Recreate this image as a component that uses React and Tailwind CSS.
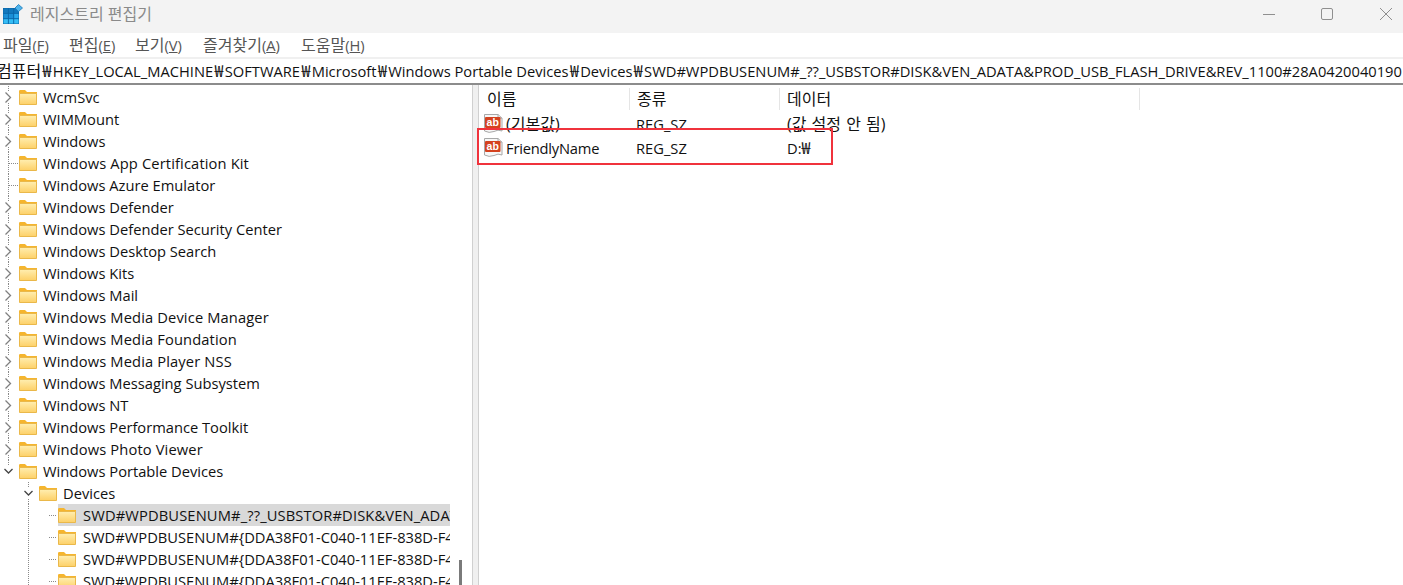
import { useId } from "react";

const FONT = "font-['Open_Sans','Noto_Sans_CJK_KR',sans-serif]";

const ADDRESS =
  "컴퓨터₩HKEY_LOCAL_MACHINE₩SOFTWARE₩Microsoft₩Windows Portable Devices₩Devices₩SWD#WPDBUSENUM#_??_USBSTOR#DISK&VEN_ADATA&PROD_USB_FLASH_DRIVE&REV_1100#28A0420040190";

const MENUS = [
  { label: "파일", key: "F", cls: "w-[66px]" },
  { label: "편집", key: "E", cls: "w-[66px]" },
  { label: "보기", key: "V", cls: "w-[68px]" },
  { label: "즐겨찾기", key: "A", cls: "w-[98px]" },
  { label: "도움말", key: "H", cls: "w-[80px]" },
];

// 레지스트리 트리 행: open = 펼침, leaf = 자식 없음, level = 들여쓰기, wide = 글자 간격 보정
const TREE = [
  { name: "WcmSvc" },
  { name: "WIMMount" },
  { name: "Windows" },
  { name: "Windows App Certification Kit", leaf: true, wide: true },
  { name: "Windows Azure Emulator", leaf: true },
  { name: "Windows Defender" },
  { name: "Windows Defender Security Center" },
  { name: "Windows Desktop Search" },
  { name: "Windows Kits" },
  { name: "Windows Mail" },
  { name: "Windows Media Device Manager", wide: true },
  { name: "Windows Media Foundation", wide: true },
  { name: "Windows Media Player NSS", wide: true },
  { name: "Windows Messaging Subsystem" },
  { name: "Windows NT" },
  { name: "Windows Performance Toolkit" },
  { name: "Windows Photo Viewer", wide: true },
  { name: "Windows Portable Devices", open: true },
  { name: "Devices", open: true, level: 1 },
  { name: "SWD#WPDBUSENUM#_??_USBSTOR#DISK&VEN_ADATA&PROD_USB_FLASH_DRIVE", level: 2, selected: true, wide: true },
  { name: "SWD#WPDBUSENUM#{DDA38F01-C040-11EF-838D-F4A80D5A3B21}", level: 2 },
  { name: "SWD#WPDBUSENUM#{DDA38F01-C040-11EF-838D-F4A80D5A3B22}", level: 2 },
  { name: "SWD#WPDBUSENUM#{DDA38F01-C040-11EF-838D-F4A80D5A3B23}", level: 2 },
];

// 한글은 라틴 글자보다 살짝 크게 보임
function Ko({ children }) {
  return <span className="text-[16px] leading-none">{children}</span>;
}

function AppIcon() {
  return (
    <svg width="20" height="20" viewBox="0 0 20 20" className="shrink-0">
      <rect x="0" y="4" width="16" height="16" fill="#0a66a8" />
      {[0, 5.33, 10.66].map((y) =>
        [0, 5.33, 10.66].map((x) => (
          <rect key={`${x}-${y}`} x={x + 0.5} y={y + 4.5} width="4.4" height="4.4" fill={y > 10 ? "#35bdf5" : y > 5 && x > 10 ? "#2aa8ea" : y > 5 ? "#1b8fd6" : "#1278bd"} />
        ))
      )}
      <path d="M15.5 0.5 L19.5 4 L15.5 7.5 L12 4 Z" fill="#4fb4ec" stroke="#1a78b8" strokeWidth="0.8" />
    </svg>
  );
}

function WindowButtons() {
  return (
    <div className="flex items-center ml-auto">
      <svg width="12" height="12" viewBox="0 0 12 12" className="mr-[46px]">
        <path d="M0 6.5H12" stroke="#8f8f8f" strokeWidth="1" />
      </svg>
      <svg width="12" height="12" viewBox="0 0 12 12" className="mr-[47px]">
        <rect x="0.5" y="0.5" width="11" height="11" rx="1.5" fill="none" stroke="#8f8f8f" strokeWidth="1" />
      </svg>
      <svg width="12" height="12" viewBox="0 0 12 12" className="mr-[11px]">
        <path d="M0 0L12 12M12 0L0 12" stroke="#8f8f8f" strokeWidth="1" />
      </svg>
    </div>
  );
}

function Folder() {
  const id = useId();
  return (
    <svg width="18" height="15" viewBox="0 0 18 15" className="shrink-0">
      <defs>
        <linearGradient id={id} x1="0" y1="0" x2="0" y2="1">
          <stop offset="0" stopColor="#ffeeb0" />
          <stop offset="1" stopColor="#fdd067" />
        </linearGradient>
      </defs>
      <path d="M0 1.2 Q0 0 1.2 0 H6 L8 2 H18 V4 H0 Z" fill="#f5b52e" />
      <path d="M0.5 3.5 H17.5 V14.5 H0.5 Z" fill={`url(#${id})`} stroke="#eab84a" strokeWidth="1" />
    </svg>
  );
}

function AbIcon() {
  return (
    <svg width="20" height="21" viewBox="0 0 20 21" className="shrink-0">
      <path d="M1.5 1.5 H15 L19 5 V18 Q15 16 11 18.5 Q6 20.5 1.5 18 Z" fill="#f7f7f7" stroke="#a8a8a8" strokeWidth="1" />
      <path d="M15 1.5 V5 H19" fill="#e4e4e4" stroke="#a8a8a8" strokeWidth="1" />
      <rect x="2" y="4" width="15.5" height="11" rx="1" fill="#d4421f" />
      <text x="9.7" y="13" textAnchor="middle" fontFamily="Liberation Sans, sans-serif" fontWeight="700" fontSize="10.5" fill="#fff">ab</text>
    </svg>
  );
}

// 트리 왼쪽의 점선과 쉐브론
function TreeGuide({ row }) {
  const level = row.level || 0;
  const width = level === 2 ? 58 : 19 + level * 20;
  const dots = { stroke: "#8a8a8a", strokeWidth: 1, strokeDasharray: "1 1", shapeRendering: "crispEdges", fill: "none" };
  const chevX = 8.5 + level * 20;
  const hasChevron = !row.leaf && level < 2;
  return (
    <svg width={width} height="22" viewBox={`0 0 ${width} 22`} className="shrink-0">
      {level === 0 && !row.open && <path d="M8.5 0V5M8.5 17V22" {...dots} />}
      {level === 0 && row.leaf && <path d="M8.5 5V17M9 11H18" {...dots} />}
      {level === 0 && row.open && <path d="M8.5 0V5" {...dots} />}
      {level === 1 && <path d="M28.5 0V5M28.5 17V22" {...dots} />}
      {level === 2 && <path d="M28.5 0V22M49 11H57" {...dots} />}
      {hasChevron && !row.open && <path d={`M${chevX - 3} 6.5L${chevX + 2} 11.5L${chevX - 3} 16.5`} fill="none" stroke="#7f7f7f" strokeWidth="1.3" />}
      {hasChevron && row.open && <path d={`M${chevX - 4} 9L${chevX} 13L${chevX + 4} 9`} fill="none" stroke="#444" strokeWidth="1.3" />}
    </svg>
  );
}

function TreeRow({ row }) {
  const textCls = row.level === 2 ? "ml-[7px]" : "ml-[6px]";
  return (
    <div className="flex items-center h-[22px] whitespace-nowrap">
      <TreeGuide row={row} />
      <div className={`flex items-center h-[22px] flex-1 min-w-0 overflow-hidden ${row.selected ? "bg-[#d9d9d9]" : ""}`}>
        <Folder />
        <span className={`${textCls} leading-[24px] ${row.wide ? "tracking-[0.13px]" : ""}`}>{row.name}</span>
      </div>
    </div>
  );
}

function ValueRow({ name, data, nameCls }) {
  return (
    <div className="flex items-center h-[24px] whitespace-nowrap">
      <div className="flex items-center w-[151px] pl-[4px]">
        <AbIcon />
        <span className={`ml-[3px] ${nameCls || ""}`}>{name}</span>
      </div>
      <div className="w-[151px] pl-[6px]">REG_SZ</div>
      <div className="pl-[6px]">{data}</div>
    </div>
  );
}

export default function App() {
  return (
    <div className={`relative w-[1403px] h-[585px] overflow-hidden bg-white text-[14.7px] text-[#111] ${FONT}`}>
      {/* 제목 표시줄 */}
      <div className="flex items-center h-[33px] pl-[3px] pb-[5px] bg-[#f3f3f3] text-[#8a8a8a]">
        <AppIcon />
        <span className="ml-[7px] text-[16px]">레지스트리 편집기</span>
        <WindowButtons />
      </div>

      {/* 메뉴 */}
      <div className="flex items-center h-[24px] pl-[3px] text-[#555]">
        {MENUS.map((m) => (
          <div key={m.key} className={m.cls}>
            <Ko>{m.label}</Ko>(<span className="underline">{m.key}</span>)
          </div>
        ))}
      </div>

      {/* 주소 표시줄 */}
      <div className="h-[28px] border-t-2 border-[#f0f0f0] border-b-2 border-b-[#8c8c8c] whitespace-nowrap overflow-hidden leading-[25px]">
        <span className="ml-[-3px] inline-block">
          <Ko>컴퓨터</Ko>
          {ADDRESS.split("₩")
            .slice(1)
            .map((part) => (
              <span key={part}>
                <span className="px-[1.4px]">
                  <Ko>₩</Ko>
                </span>
                {part}
              </span>
            ))}
        </span>
      </div>

      <div className="flex h-[500px]">
        {/* 트리 */}
        <div className="w-[450px] overflow-hidden pt-px">
          {TREE.map((row) => (
            <TreeRow key={row.name} row={row} />
          ))}
        </div>
        <div className="relative w-[22px] bg-white">
          <div className="absolute left-[9px] bottom-0 w-[3px] h-[25px] bg-[#7a7a7a]" />
        </div>
        <div className="w-[7px] bg-[#f0f0f0] border-x border-[#d0d0d0]" />

        {/* 값 목록 */}
        <div className="flex-1 min-w-0">
          <div className="flex h-[27px] pt-[3px]">
            <div className="w-[151px] h-[22px] pl-[8px] border-r border-[#e5e5e5] flex items-center"><Ko>이름</Ko></div>
            <div className="w-[150px] h-[22px] pl-[7px] border-r border-[#e5e5e5] flex items-center"><Ko>종류</Ko></div>
            <div className="w-[360px] h-[22px] pl-[7px] border-r border-[#e5e5e5] flex items-center"><Ko>데이터</Ko></div>
          </div>
          <ValueRow name={<Ko>(기본값)</Ko>} data={<span className="[word-spacing:1px]"><Ko>(값 설정 안 됨)</Ko></span>} />
          <ValueRow name="FriendlyName" nameCls="tracking-[-0.2px]" data={<>D:<Ko>₩</Ko></>} />
        </div>
      </div>

      {/* 빨간 강조 박스 */}
      <div className="absolute left-[477px] top-[128px] w-[356px] h-[37px] border-2 border-[#f0323c] pointer-events-none" />
    </div>
  );
}
